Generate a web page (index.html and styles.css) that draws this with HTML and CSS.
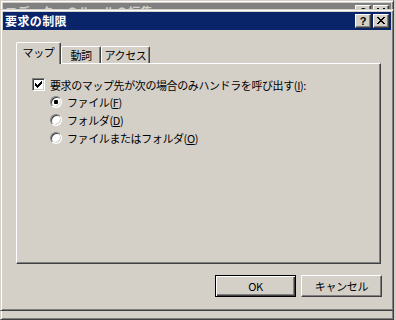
FILE: index.html
```html
<!DOCTYPE html>
<html lang="ja">
<head>
<meta charset="utf-8">
<title>要求の制限</title>
<link rel="stylesheet" href="styles.css">
</head>
<body>
<div class="desktop">
  <div class="win parent">
    <div class="titlebar inactive">
      <span class="title-text">エディターのルールの編集</span>
      <div class="title-btns">
        <span class="tbtn help">?</span>
        <span class="tbtn"><svg class="xglyph" width="8" height="7" viewBox="0 0 8 7"><path d="M0 0h2v1h-2z M6 0h2v1h-2z M1 1h2v1h-2z M5 1h2v1h-2z M2 2h4v1h-4z M3 3h2v1h-2z M2 4h4v1h-4z M1 5h2v1h-2z M5 5h2v1h-2z M0 6h2v1h-2z M6 6h2v1h-2z"/></svg></span>
      </div>
    </div>
  </div>

  <div class="win dialog">
    <div class="titlebar active">
      <span class="title-text">要求の制限</span>
      <div class="title-btns">
        <span class="tbtn help">?</span>
        <span class="tbtn"><svg class="xglyph" width="8" height="7" viewBox="0 0 8 7"><path d="M0 0h2v1h-2z M6 0h2v1h-2z M1 1h2v1h-2z M5 1h2v1h-2z M2 2h4v1h-4z M3 3h2v1h-2z M2 4h4v1h-4z M1 5h2v1h-2z M5 5h2v1h-2z M0 6h2v1h-2z M6 6h2v1h-2z"/></svg></span>
      </div>
    </div>
    <div class="dlg-body">
      <div class="tabs">
        <div class="tab selected tab-map">マップ</div>
        <div class="tab tab-verb">動詞</div>
        <div class="tab tab-access">アクセス</div>
      </div>
      <div class="panel">
        <div class="row check-row">
          <span class="checkbox"><svg width="7" height="7" viewBox="0 0 7 7"><path d="M6 0h1v1h-1z M5 1h2v1h-2z M0 2h1v1h-1z M4 2h3v1h-3z M0 3h2v1h-2z M3 3h3v1h-3z M0 4h5v1h-5z M1 5h3v1h-3z M2 6h1v1h-1z"/></svg></span>
          <span class="label">要求のマップ先が次の場合のみハンドラを呼び出す(<u>I</u>):</span>
        </div>
        <div class="radios">
          <div class="row radio-row">
            <span class="radio on"><span class="dot"></span></span>
            <span class="label">ファイル(<u>F</u>)</span>
          </div>
          <div class="row radio-row">
            <span class="radio"></span>
            <span class="label">フォルダ(<u>D</u>)</span>
          </div>
          <div class="row radio-row">
            <span class="radio"></span>
            <span class="label">ファイルまたはフォルダ(<u>O</u>)</span>
          </div>
        </div>
      </div>
      <div class="buttons">
        <div class="btn default">OK</div>
        <div class="btn">キャンセル</div>
      </div>
    </div>
  </div>
</div>
</body>
</html>
```

FILE: styles.css
```css
html, body {
  margin: 0;
  padding: 0;
}

body {
  width: 396px;
  height: 320px;
  overflow: hidden;
  background: #d4d0c8;
  font-family: "Noto Sans CJK JP", "Noto Sans", sans-serif;
  font-size: 11px;
  color: #000;
}

.desktop {
  position: relative;
  width: 396px;
  height: 320px;
}

/* classic 3D window frame */
.win {
  position: absolute;
  box-sizing: border-box;
  background: #d4d0c8;
  border: 1px solid;
  border-color: #d4d0c8 #404040 #404040 #d4d0c8;
  box-shadow: inset 1px 1px #fff, inset -1px -1px #808080;
  padding: 2px;
  display: flex;
  flex-direction: column;
}

.parent {
  left: 0;
  top: 0;
  width: 394px;
  height: 320px;
}

.dialog {
  left: 0;
  top: 9px;
  width: 394px;
  height: 302px;
}

.titlebar {
  height: 18px;
  flex: none;
  display: flex;
  align-items: center;
  justify-content: space-between;
  padding: 0 2px 0 2px;
}

.titlebar.active {
  background: #0a246a;
  color: #fff;
}

.titlebar.inactive {
  background: #808080;
  color: #d4d0c8;
}

.title-text {
  font-weight: bold;
  font-size: 12px;
  line-height: 18px;
  letter-spacing: 0.4px;
  white-space: nowrap;
}

.title-btns {
  display: flex;
  gap: 2px;
}

.tbtn {
  box-sizing: border-box;
  width: 16px;
  height: 14px;
  background: #d4d0c8;
  border: 1px solid;
  border-color: #fff #404040 #404040 #fff;
  box-shadow: inset -1px -1px #808080;
  display: flex;
  align-items: center;
  justify-content: center;
  color: #000;
}

.tbtn.help {
  font-family: "Liberation Sans", Arial, sans-serif;
  font-weight: bold;
  font-size: 11px;
  line-height: 12px;
  padding-bottom: 1px;
}

.xglyph {
  display: block;
  shape-rendering: crispEdges;
  fill: #000;
  margin-bottom: 1px;
}

.dlg-body {
  flex: 1;
  display: flex;
  flex-direction: column;
  padding: 12px 9px 0 13px;
}

/* tabs */
.tabs {
  display: flex;
  align-items: flex-end;
  height: 21px;
  flex: none;
}

.tab {
  box-sizing: border-box;
  height: 17px;
  background: #d4d0c8;
  border-top: 1px solid #fff;
  border-left: 1px solid #fff;
  border-right: 1px solid #404040;
  box-shadow: inset -1px 0 #808080;
  border-radius: 2px 2px 0 0;
  padding-top: 1px;
  line-height: 15px;
  text-align: center;
  letter-spacing: -0.4px;
  white-space: nowrap;
}

.tab.selected {
  height: 22px;
  margin-bottom: -1px;
  padding-top: 2px;
  position: relative;
  z-index: 1;
}

.tab-map { width: 45px; }
.tab-verb { width: 40px; }
.tab-access { width: 49px; }

/* panel */
.panel {
  box-sizing: border-box;
  width: 365px;
  height: 201px;
  flex: none;
  border: 1px solid;
  border-color: #fff #404040 #404040 #fff;
  box-shadow: inset -1px -1px #808080;
  padding: 12px 0 0 15px;
}

.row {
  display: flex;
  align-items: center;
  gap: 5px;
  white-space: nowrap;
}

.check-row {
  height: 17px;
}

.radios {
  margin-left: 18px;
}

.radio-row {
  height: 18px;
}

.label {
  letter-spacing: -0.4px;
  line-height: 14px;
}

.checkbox {
  box-sizing: border-box;
  width: 13px;
  height: 13px;
  flex: none;
  background: #fff;
  border: 1px solid;
  border-color: #808080 #fff #fff #808080;
  box-shadow: inset 1px 1px #404040, inset -1px -1px #d4d0c8;
  display: flex;
  align-items: center;
  justify-content: center;
}

.checkbox svg {
  display: block;
  shape-rendering: crispEdges;
  fill: #000;
}

.radio {
  box-sizing: border-box;
  width: 12px;
  height: 12px;
  flex: none;
  border-radius: 50%;
  background: #fff;
  border: 1px solid;
  border-color: #808080 #fff #fff #808080;
  box-shadow: inset 1px 1px #404040, inset -1px -1px #d4d0c8;
  display: flex;
  align-items: center;
  justify-content: center;
}

.dot {
  width: 4px;
  height: 4px;
  border-radius: 1px;
  background: #000;
}

/* buttons */
.buttons {
  display: flex;
  justify-content: flex-end;
  gap: 5px;
  margin-top: 11px;
}

.btn {
  box-sizing: border-box;
  width: 81px;
  height: 22px;
  background: #d4d0c8;
  border: 1px solid;
  border-color: #fff #404040 #404040 #fff;
  box-shadow: inset -1px -1px #808080;
  display: flex;
  align-items: center;
  justify-content: center;
  letter-spacing: -0.3px;
}

.btn.default {
  border-color: #000;
  box-shadow: inset 1px 1px #fff, inset -1px -1px #404040, inset -2px -2px #808080;
}
```
